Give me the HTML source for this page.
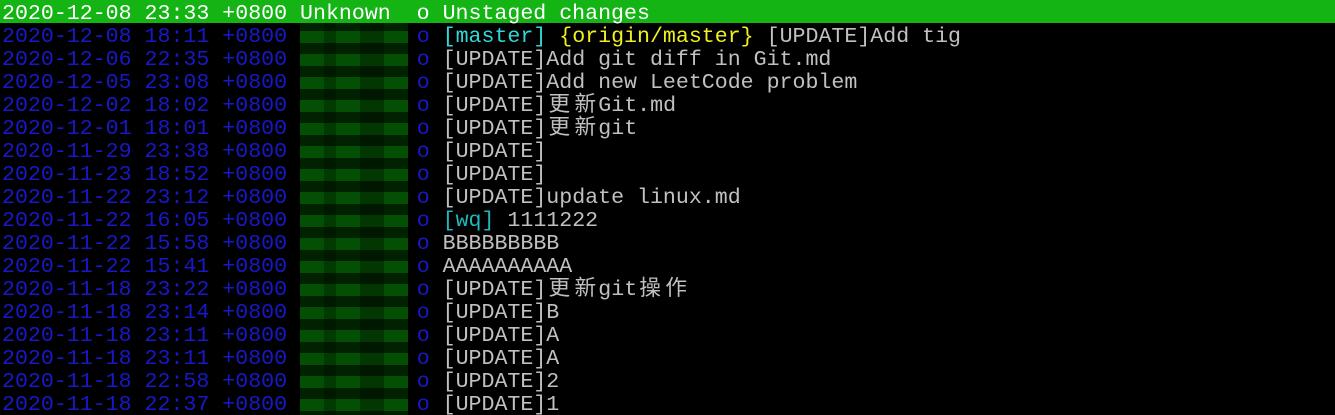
<!DOCTYPE html>
<html><head><meta charset="utf-8"><style>
html,body{margin:0;padding:0;background:#000;width:1335px;height:415px;overflow:hidden}
.wrap{position:relative;width:1335px;height:415px}
.l{position:absolute;left:2px;height:23px;line-height:28px;white-space:pre;font-family:"Liberation Mono","Noto Sans CJK SC",monospace;font-size:21.6px;color:#c0c0c0}
.b{color:#1818c8}.c{color:#30d8d8}.y{color:#f0f020}.t{color:#20b8b8}
.k{display:inline-block;width:26px;text-align:center;height:23px;vertical-align:top}
.hl{position:absolute;left:0;top:0;width:1335px;height:23px;background:#13b413}
.blur{position:absolute;left:300px;top:23px;width:108px;height:392px;
background:repeating-linear-gradient(to bottom,#002200 0px,#002200 8px,#034f03 8px,#034f03 20px,#002200 20px,#002200 23px)}
.blur2{position:absolute;left:300px;top:23px;width:108px;height:392px;
background:repeating-linear-gradient(to right,rgba(0,0,0,0) 0,rgba(0,0,0,0) 24px,rgba(0,0,0,.25) 24px,rgba(0,0,0,.25) 36px,rgba(0,0,0,0) 36px,rgba(0,0,0,0) 60px,rgba(0,0,0,.3) 60px,rgba(0,0,0,.3) 84px)}
</style></head><body><div class="wrap">
<div class="hl"></div>
<div class="blur"></div><div class="blur2"></div>
<div class="l" style="top:0;color:#fff">2020-12-08 23:33 +0800 Unknown  o Unstaged changes</div>
<div class="l" style="top:23px"><span class="b">2020-12-08 18:11 +0800</span>          <span class="b">o</span> <span class="c">[master]</span> <span class="y">{origin/master}</span> [UPDATE]Add tig</div>
<div class="l" style="top:46px"><span class="b">2020-12-06 22:35 +0800</span>          <span class="b">o</span> [UPDATE]Add git diff in Git.md</div>
<div class="l" style="top:69px"><span class="b">2020-12-05 23:08 +0800</span>          <span class="b">o</span> [UPDATE]Add new LeetCode problem</div>
<div class="l" style="top:92px"><span class="b">2020-12-02 18:02 +0800</span>          <span class="b">o</span> [UPDATE]<span class="k">更</span><span class="k">新</span>Git.md</div>
<div class="l" style="top:115px"><span class="b">2020-12-01 18:01 +0800</span>          <span class="b">o</span> [UPDATE]<span class="k">更</span><span class="k">新</span>git</div>
<div class="l" style="top:138px"><span class="b">2020-11-29 23:38 +0800</span>          <span class="b">o</span> [UPDATE]</div>
<div class="l" style="top:161px"><span class="b">2020-11-23 18:52 +0800</span>          <span class="b">o</span> [UPDATE]</div>
<div class="l" style="top:184px"><span class="b">2020-11-22 23:12 +0800</span>          <span class="b">o</span> [UPDATE]update linux.md</div>
<div class="l" style="top:207px"><span class="b">2020-11-22 16:05 +0800</span>          <span class="b">o</span> <span class="t">[wq]</span> 1111222</div>
<div class="l" style="top:230px"><span class="b">2020-11-22 15:58 +0800</span>          <span class="b">o</span> BBBBBBBBB</div>
<div class="l" style="top:253px"><span class="b">2020-11-22 15:41 +0800</span>          <span class="b">o</span> AAAAAAAAAA</div>
<div class="l" style="top:276px"><span class="b">2020-11-18 23:22 +0800</span>          <span class="b">o</span> [UPDATE]<span class="k">更</span><span class="k">新</span>git<span class="k">操</span><span class="k">作</span></div>
<div class="l" style="top:299px"><span class="b">2020-11-18 23:14 +0800</span>          <span class="b">o</span> [UPDATE]B</div>
<div class="l" style="top:322px"><span class="b">2020-11-18 23:11 +0800</span>          <span class="b">o</span> [UPDATE]A</div>
<div class="l" style="top:345px"><span class="b">2020-11-18 23:11 +0800</span>          <span class="b">o</span> [UPDATE]A</div>
<div class="l" style="top:368px"><span class="b">2020-11-18 22:58 +0800</span>          <span class="b">o</span> [UPDATE]2</div>
<div class="l" style="top:391px"><span class="b">2020-11-18 22:37 +0800</span>          <span class="b">o</span> [UPDATE]1</div>
</div></body></html>
